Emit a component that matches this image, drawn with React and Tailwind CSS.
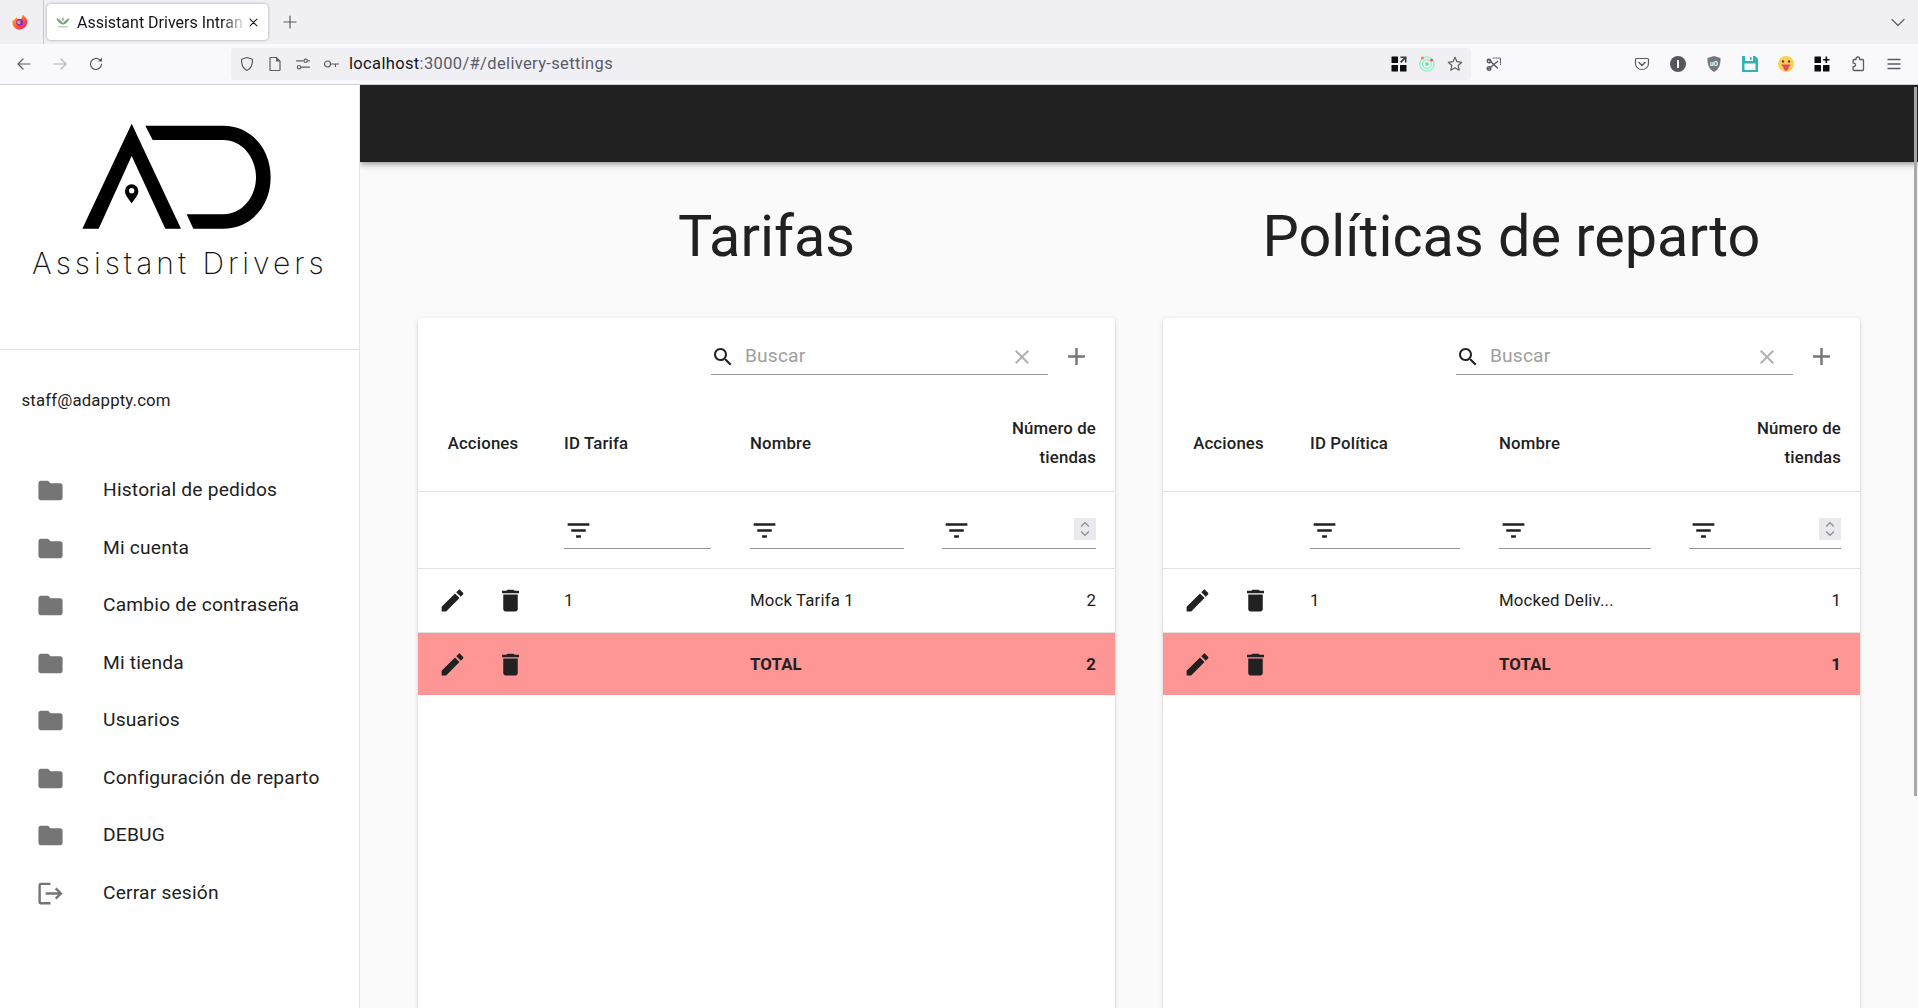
import { useState } from 'react';

const MUI = {
  edit: 'M3 17.25V21h3.75L17.81 9.94l-3.75-3.75L3 17.25zM20.71 7.04c.39-.39.39-1.02 0-1.41l-2.34-2.34c-.39-.39-1.02-.39-1.41 0l-1.83 1.83 3.75 3.75 1.83-1.83z',
  trash: 'M6 19c0 1.1.9 2 2 2h8c1.1 0 2-.9 2-2V7H6v12zM19 4h-3.5l-1-1h-5l-1 1H5v2h14V4z',
  search: 'M15.5 14h-.79l-.28-.27C15.41 12.59 16 11.11 16 9.5 16 5.91 13.09 3 9.5 3S3 5.91 3 9.5 5.91 16 9.5 16c1.61 0 3.09-.59 4.23-1.57l.27.28v.79l5 4.99L20.49 19l-4.99-5zm-6 0C7.01 14 5 11.99 5 9.5S7.01 5 9.5 5 14 7.01 14 9.5 11.99 14 9.5 14z',
  clear: 'M19 6.41L17.59 5 12 10.59 6.41 5 5 6.41 10.59 12 5 17.59 6.41 19 12 13.41 17.59 19 19 17.59 13.41 12z',
  add: 'M19 13h-6v6h-2v-6H5v-2h6V5h2v6h6v2z',
  filter: 'M10 18h4v-2h-4v2zM3 6v2h18V6H3zm3 7h12v-2H6v2z',
  folder: 'M10 4H4c-1.1 0-1.99.9-1.99 2L2 18c0 1.1.9 2 2 2h16c1.1 0 2-.9 2-2V8c0-1.1-.9-2-2-2h-8l-2-2z',
  logout: 'M17 7l-1.41 1.41L18.17 11H8v2h10.17l-2.58 2.58L17 17l5-5zM4 5h8V3H4c-1.1 0-2 .9-2 2v14c0 1.1.9 2 2 2h8v-2H4V5z',
};

function Mui({ name, className }) {
  return (
    <svg viewBox="0 0 24 24" fill="currentColor" className={className}>
      <path d={MUI[name]} />
    </svg>
  );
}

function Ff({ children, className = 'w-4 h-4 text-[#5b5b66]' }) {
  return (
    <svg viewBox="0 0 16 16" fill="none" stroke="currentColor" strokeWidth="1.2" strokeLinecap="round" strokeLinejoin="round" className={className}>
      {children}
    </svg>
  );
}

function Slot({ children, className = 'w-9' }) {
  return <div className={`flex h-10 shrink-0 items-center justify-center ${className}`}>{children}</div>;
}

function FirefoxLogo() {
  return (
    <svg viewBox="0 0 16 16" className="h-4 w-4">
      <defs>
        <linearGradient id="fx" x1="0" y1="0" x2="1" y2="1">
          <stop offset="0" stopColor="#ffbd2e" />
          <stop offset="0.55" stopColor="#ff5a36" />
          <stop offset="1" stopColor="#e31587" />
        </linearGradient>
      </defs>
      <path d="M10.6 0.4c.9 1.4 3.4 2.6 4.3 5.3.8 2.6.1 5.6-1.9 7.6-2.6 2.6-7 2.9-10 .6C.5 12-.2 8.3.9 5.4 1.2 6 1.5 6.3 2 6.6c.5-1.3 1.6-2.4 3-3-.1.5 0 1 .3 1.3 1-.3 2.2-.2 3.2.3 1.1-1 2.2-2.6 2.1-4.8z" fill="url(#fx)" />
      <circle cx="7.6" cy="8.3" r="3.4" fill="#7a2ae0" />
      <path d="M5.2 7.2c1-.9 3-.9 3.9 0-.6.1-1.3.2-1.7.6.7 0 1.2.5 1.2 1.1 0 .7-.7 1.3-1.7 1.3-1 0-1.9-.8-2-1.9-.1-.4.1-.8.3-1.1z" fill="#ff9a2e" />
    </svg>
  );
}

function TabFavicon() {
  return (
    <svg viewBox="0 0 16 16" className="h-4 w-4">
      <path d="M1.5 4c1.5.4 4 1.7 6.5 5 2.5-3.3 5-4.6 6.5-5-.6 2.6-2.7 6-6.5 6.6C4.2 10 2.1 6.6 1.5 4z" fill="#7fa37f" />
      <path d="M8 3l1.4 2.6L8 7.4 6.6 5.6z" fill="#9dbb9d" />
      <rect x="3" y="12.2" width="10" height="1.2" fill="#b9c9b9" />
    </svg>
  );
}

function GridIcon({ plus }) {
  return (
    <svg viewBox="0 0 16 16" className="h-4 w-4" fill="#0c0c0d">
      <rect x="0.5" y="0.5" width="6.5" height="6.5" rx="0.5" />
      <rect x="0.5" y="9" width="6.5" height="6.5" rx="0.5" />
      <rect x="9" y="9" width="6.5" height="6.5" rx="0.5" />
      {plus ? (
        <path d="M11.5.5h1.6v2.4h2.4v1.6h-2.4v2.4h-1.6V4.5H9.1V2.9h2.4z" />
      ) : (
        <path d="M9.5.5h6v6h-1.6V3.2L10.2 7 9 5.8l3.7-3.7H9.5z" fill="#38383d" />
      )}
    </svg>
  );
}

function Tabstrip() {
  return (
    <div className="flex h-11 items-center bg-[#f0f0f4]">
      <div className="flex h-11 w-11 shrink-0 items-center justify-center border-r border-[#c8c8cc] pr-[3px]">
        <FirefoxLogo />
      </div>
      <div className="relative ml-[3px] flex h-9 w-[221px] items-center rounded-[4px] bg-white pl-2 shadow-[0_0_3px_rgba(0,0,0,0.35)]">
        <TabFavicon />
        <span className="ml-[6px] w-[170px] whitespace-nowrap pt-px text-[16px] text-[#15141a] [mask-image:linear-gradient(to_right,black_85%,transparent)]">
          Assistant Drivers Intran
        </span>
        <Ff className="ml-px h-[11px] w-[11px] text-[#15141a]">
          <path d="M3 3l10 10M13 3L3 13" strokeWidth="1.5" />
        </Ff>
      </div>
      <Ff className="ml-[14px] h-4 w-4 text-[#5b5b66]">
        <path d="M8 2v12M2 8h12" />
      </Ff>
      <div className="flex-1" />
      <Ff className="mr-3 h-4 w-4 text-[#5b5b66]">
        <path d="M2 5.5l6 6 6-6" />
      </Ff>
    </div>
  );
}

function Toolbar() {
  return (
    <div className="flex h-[41px] items-start border-b border-[#cfcfd8] bg-[#f9f9fb] pl-[6px] pr-[6px]">
      <Slot>
        <Ff>
          <path d="M14 8H2.5M7 3L2 8l5 5" />
        </Ff>
      </Slot>
      <Slot>
        <Ff className="h-4 w-4 text-[#b4b4ba]">
          <path d="M2 8h11.5M9 3l5 5-5 5" />
        </Ff>
      </Slot>
      <Slot>
        <Ff>
          <path d="M13.5 8a5.5 5.5 0 1 1-1.8-4.1" />
          <path d="M14 1.5v4h-4z" fill="currentColor" stroke="none" />
        </Ff>
      </Slot>
      <div className="ml-[117px] mt-1 flex h-8 w-[1240px] shrink-0 items-center rounded-[4px] bg-[#f0f0f4] pl-[2px] pr-[2px]">
        <Slot className="h-8 w-7">
          <Ff>
            <path d="M8 1.5l5.5 1.8c.2 4.6-.9 9-5.5 11.2C3.4 12.3 2.3 7.9 2.5 3.3z" />
          </Ff>
        </Slot>
        <Slot className="h-8 w-7">
          <Ff>
            <path d="M3 2.2c0-.4.3-.7.7-.7h5.6L13 5.2v8.6c0 .4-.3.7-.7.7H3.7a.7.7 0 0 1-.7-.7z" />
            <path d="M9 1.5v4h4" fill="currentColor" stroke="none" />
          </Ff>
        </Slot>
        <Slot className="h-8 w-7">
          <Ff>
            <circle cx="10.7" cy="4.8" r="1.7" />
            <circle cx="4" cy="11.2" r="1.7" />
            <path d="M1.5 4.8h6.5M6.5 11.2h8M13.5 4.8h1" />
          </Ff>
        </Slot>
        <Slot className="h-8 w-7">
          <Ff>
            <circle cx="4.5" cy="8" r="3" />
            <path d="M7.5 8h8M12.5 8v2.5" />
          </Ff>
        </Slot>
        <span className="ml-[4px] whitespace-nowrap pt-px text-[16.5px] tracking-[0.35px] text-[#5b5b66]">
          <span className="text-[#15141a]">localhost</span>:3000/#/delivery-settings
        </span>
        <div className="flex-1" />
        <Slot className="h-8 w-7">
          <GridIcon />
        </Slot>
        <Slot className="h-8 w-7">
          <svg viewBox="0 0 16 16" className="h-4 w-4" fill="none">
            <circle cx="8" cy="8" r="7.2" stroke="#86f0c0" strokeWidth="1.2" />
            <circle cx="8" cy="8" r="4.4" stroke="#86f0c0" strokeWidth="1.2" />
            <circle cx="8" cy="8" r="1.8" fill="#5fdca0" />
            <circle cx="3.5" cy="2" r="1.5" fill="#f58a3c" />
            <circle cx="12.6" cy="4.2" r="1.4" fill="#ea5a3a" />
          </svg>
        </Slot>
        <Slot className="h-8 w-7">
          <Ff>
            <path d="M8 1.3l2 4.4 4.7.6-3.5 3.2 1 4.7L8 11.8l-4.2 2.4 1-4.7L1.3 6.3 6 5.7z" />
          </Ff>
        </Slot>
      </div>
      <Slot className="ml-[5px] w-9">
        <Ff>
          <path d="M7 2h7.5v6.5" strokeDasharray="1.4 1.4" />
          <path d="M2.5 3.5l9 8.5M11.5 5.5L2.5 13" strokeWidth="1.4" />
          <circle cx="3" cy="5" r="1.8" strokeWidth="1.4" />
          <circle cx="3" cy="12.5" r="1.8" strokeWidth="1.4" />
        </Ff>
      </Slot>
      <div className="flex-1" />
      <Slot>
        <Ff>
          <path d="M2.5 2.5h11c.6 0 1 .4 1 1v4c0 3.6-3 6-6.5 6s-6.5-2.4-6.5-6v-4c0-.6.4-1 1-1z" />
          <path d="M5 6.5l3 3 3-3" strokeWidth="1.5" />
        </Ff>
      </Slot>
      <Slot>
        <svg viewBox="0 0 16 16" className="h-4 w-4">
          <circle cx="8" cy="8" r="8" fill="#57565f" />
          <rect x="7" y="4" width="2" height="8" fill="#fff" />
        </svg>
      </Slot>
      <Slot>
        <svg viewBox="0 0 16 16" className="h-4 w-4">
          <path d="M8 0l6.5 2c.2 6-1 11-6.5 14C2.5 13 1.3 8 1.5 2z" fill="#77767c" />
          <text x="8" y="10" textAnchor="middle" fontSize="6.5" fontWeight="700" fill="#fff" fontFamily="Roboto, sans-serif">uO</text>
        </svg>
      </Slot>
      <Slot>
        <svg viewBox="0 0 16 16" className="h-4 w-4">
          <path d="M0 0h13l3 3v13H0z" fill="#33b2b2" />
          <rect x="3" y="0" width="8" height="5" fill="#f9f9fb" />
          <rect x="8" y="1" width="1.5" height="3" fill="#33b2b2" />
          <rect x="2.5" y="7.5" width="11" height="6.5" fill="#f9f9fb" />
        </svg>
      </Slot>
      <Slot>
        <svg viewBox="0 0 16 16" className="h-4 w-4">
          <circle cx="8" cy="8" r="8" fill="#fcd053" />
          <circle cx="5" cy="5.5" r="1.2" fill="#5a3a1a" />
          <circle cx="11" cy="5.5" r="1.2" fill="#5a3a1a" />
          <path d="M3.5 8.5h9c0 1.2-1 2-1.8 2.2 0 2.5-1.3 4-2.7 4s-2.7-1.500-2.700-4C4.5 10.5 3.5 9.7 3.5 8.5z" fill="#e8475f" />
        </svg>
      </Slot>
      <Slot>
        <GridIcon plus />
      </Slot>
      <Slot>
        <Ff>
          <path d="M6 3.5V2.800a1.800 1.800 0 0 1 3.600 0v.7h3c.5 0 .9.400.9.900v9.200c0 .5-.4.900-.9.900H4c-.5 0-.9-.4-.9-.9v-2.900h.6a1.800 1.800 0 0 0 0-3.600h-.6V4.400c0-.5.400-.9.900-.9z" strokeWidth="1.3" />
        </Ff>
      </Slot>
      <Slot>
        <Ff>
          <path d="M2 3.5h12M2 8h12M2 12.5h12" strokeWidth="1.3" />
        </Ff>
      </Slot>
    </div>
  );
}

function Logo() {
  return (
    <svg viewBox="240 110 580 330" className="ml-[80px] block h-[110px] w-[193.33px]">
      <path d="M395 118L543 433H496L395 215L296 433H247Z" fill="#000" />
      <path d="M395 357C384 342 375 332 375 320A20 20 0 0 1 415 320C415 332 406 342 395 357Z" fill="#000" />
      <circle cx="395" cy="319" r="8" fill="#fff" />
      <path d="M436 124H670C750 124 812 190 812 279C812 368 750 433 670 433H580L560 390H670C725 390 768 340 768 279C768 218 725 167 670 167H458Z" fill="#000" />
    </svg>
  );
}

const NAV = [
  { label: 'Historial de pedidos', icon: 'folder' },
  { label: 'Mi cuenta', icon: 'folder' },
  { label: 'Cambio de contraseña', icon: 'folder' },
  { label: 'Mi tienda', icon: 'folder' },
  { label: 'Usuarios', icon: 'folder' },
  { label: 'Configuración de reparto', icon: 'folder' },
  { label: 'DEBUG', icon: 'folder' },
  { label: 'Cerrar sesión', icon: 'logout' },
];

function Sidebar() {
  return (
    <aside className="h-full w-[360px] shrink-0 border-r border-[#e6e6e6] bg-white">
      <div className="h-[265px] border-b border-[#e0e0e0] pt-9">
        <Logo />
        <div className="ml-[32px] mt-[14px] whitespace-nowrap font-[family-name:Inter,sans-serif] text-[30px] font-extralight leading-[36px] tracking-[4px] text-[#111]">
          Assistant Drivers
        </div>
      </div>
      <div className="flex h-[112px] items-start pl-[21.5px] pt-[38px] text-[16.8px] leading-6 tracking-[0.15px] text-[#212121]">
        staff@adappty.com
      </div>
      <nav>
        {NAV.map((item) => (
          <div key={item.label} className="flex h-[57.5px] items-center pl-[36px]">
            <Mui name={item.icon} className="h-[29px] w-[29px] text-[#757575]" />
            <span className="ml-[38px] whitespace-nowrap text-[19.2px] tracking-[0.2px] text-[#212121]">{item.label}</span>
          </div>
        ))}
      </nav>
    </aside>
  );
}

function ActionIcons() {
  return (
    <div className="flex items-center pl-[19.5px]">
      <Mui name="edit" className="h-[29px] w-[29px]" />
      <Mui name="trash" className="ml-[29.5px] h-[29px] w-[29px]" />
    </div>
  );
}

function FilterInput({ className, number }) {
  return (
    <div className={`relative flex h-[35px] items-center border-b border-[#949494] pb-px ${className}`}>
      <Mui name="filter" className="h-[29px] w-[29px] text-[#212121]" />
      {number && (
        <div className="absolute bottom-[8px] right-0 flex h-[22px] w-[22px] flex-col items-center justify-center bg-[#e9e9ed]">
          <svg viewBox="0 0 10 14" className="h-[18px] w-[14px]" fill="none" stroke="#8a8a90" strokeWidth="1">
            <path d="M2 5l3-3 3 3M2 9l3 3 3-3" />
          </svg>
        </div>
      )}
    </div>
  );
}

function TableCard({ idLabel, name, stores, cols, inputs }) {
  return (
    <div className="h-[800px] rounded-[4px] bg-white text-[16.8px] tracking-[0.15px] text-[#212121] shadow-[0_3px_1px_-2px_rgba(0,0,0,0.2),0_2px_2px_rgba(0,0,0,0.14),0_1px_5px_rgba(0,0,0,0.12)]">
      <div className="flex h-[77px] items-start justify-end pr-[24px] pt-[22px]">
        <div className="flex h-[35px] w-[337px] items-center border-b border-[#949494]">
          <Mui name="search" className="h-6 w-6 text-[#212121]" />
          <span className="ml-[10px] -mt-[2px] flex-1 text-[19.2px] text-[#a0a0a0]">Buscar</span>
          <Mui name="clear" className="mr-[14px] h-6 w-6 text-[#b0b0b0]" />
        </div>
        <Mui name="add" className="ml-[14px] mt-[2px] h-[29px] w-[29px] text-[#757575]" />
      </div>

      <div className={`grid h-[97px] items-center border-b border-[#e0e0e0] font-medium leading-[29px] ${cols}`}>
        <div className="text-center">Acciones</div>
        <div className="pl-4">{idLabel}</div>
        <div className="pl-4">Nombre</div>
        <div className="pl-4 pr-[19px] text-right">
          Número de
          <br />
          tiendas
        </div>
      </div>

      <div className={`grid h-[77px] items-start border-b border-[#e0e0e0] pt-[22px] ${cols}`}>
        <div />
        <div className="pl-4">
          <FilterInput className={inputs[0]} />
        </div>
        <div className="pl-4">
          <FilterInput className={inputs[1]} />
        </div>
        <div className="pl-4 pr-[19px]">
          <FilterInput number />
        </div>
      </div>

      <div className={`grid h-[64px] items-center border-b border-[#e0e0e0] ${cols}`}>
        <ActionIcons />
        <div className="pl-4">1</div>
        <div className="pl-4">{name}</div>
        <div className="pl-4 pr-[19px] text-right">{stores}</div>
      </div>

      <div className={`grid h-[62px] items-center bg-[#ff9696] pt-px font-bold ${cols}`}>
        <ActionIcons />
        <div />
        <div className="pl-4">TOTAL</div>
        <div className="pl-4 pr-[19px] text-right">{stores}</div>
      </div>
    </div>
  );
}

export default function App() {
  const [tarifas] = useState({ name: 'Mock Tarifa 1', stores: 2 });
  const [politicas] = useState({ name: 'Mocked Deliv...', stores: 1 });

  return (
    <div className="flex h-screen flex-col overflow-hidden bg-[#fafafa] font-[family-name:Roboto,sans-serif]">
      <Tabstrip />
      <Toolbar />
      <div className="relative flex min-h-0 flex-1">
        <Sidebar />
        <main className="min-w-0 flex-1 overflow-hidden">
          <div className="relative h-[77px] bg-[#212121] shadow-[0_2px_4px_-1px_rgba(0,0,0,0.2),0_4px_5px_rgba(0,0,0,0.14),0_1px_10px_rgba(0,0,0,0.12)]" />
          <div className="ml-[58px] flex gap-[48px]">
            <section className="w-[697px] shrink-0">
              <h2 className="flex h-[156px] items-center justify-center pb-[5px] text-[57.6px] text-[#212121]">Tarifas</h2>
              <TableCard
                idLabel="ID Tarifa"
                name={tarifas.name}
                stores={tarifas.stores}
                cols="grid-cols-[130px_186px_192px_189px]"
                inputs={['mr-[23px]', 'mr-[22px]']}
              />
            </section>
            <section className="w-[697px] shrink-0">
              <h2 className="flex h-[156px] items-center justify-center pb-[5px] text-[57.6px] text-[#212121]">Políticas de reparto</h2>
              <TableCard
                idLabel="ID Política"
                name={politicas.name}
                stores={politicas.stores}
                cols="grid-cols-[131px_189px_190px_187px]"
                inputs={['mr-[23px]', 'mr-[22px]']}
              />
            </section>
          </div>
        </main>
        {/* overlay scrollbar */}
        <div className="absolute right-px top-[2px] h-[709px] w-[3px] bg-[#a8a8a8]" />
      </div>
    </div>
  );
}
